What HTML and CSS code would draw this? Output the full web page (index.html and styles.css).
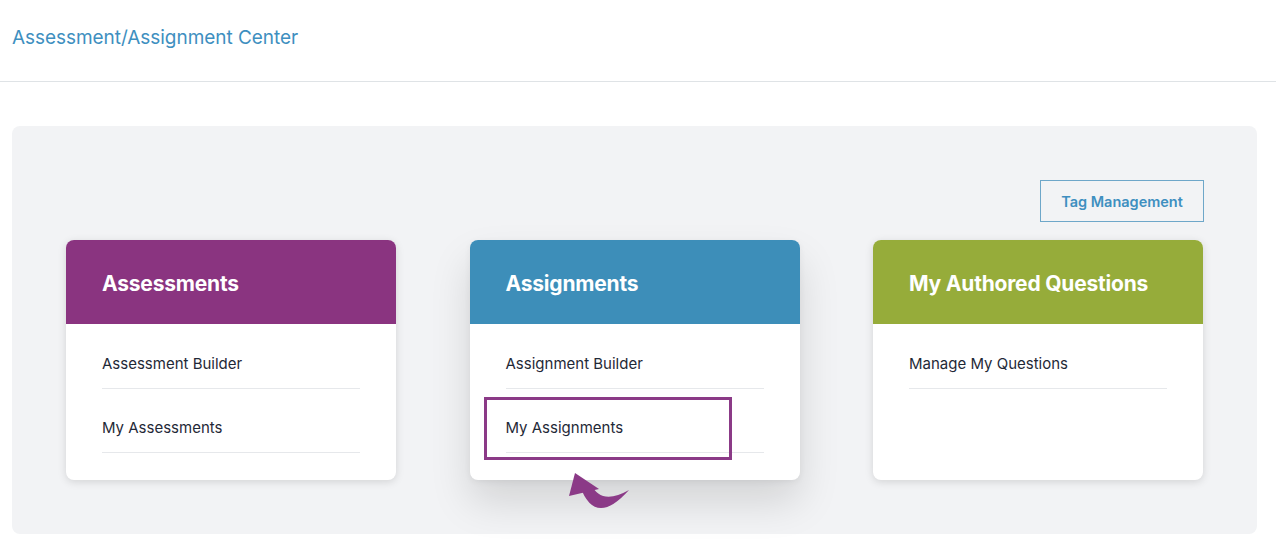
FILE: index.html
```html
<!DOCTYPE html>
<html lang="en">
<head>
<meta charset="utf-8">
<title>Assessment/Assignment Center</title>
<link rel="stylesheet" href="styles.css">
</head>
<body>
<header class="topbar">
  <h1 class="page-title">Assessment/Assignment Center</h1>
</header>
<main class="main">
  <section class="panel">
    <div class="toolbar">
      <button class="tag-btn" type="button">Tag Management</button>
    </div>
    <div class="cards">
      <div class="card">
        <div class="card-head purple">Assessments</div>
        <ul class="card-list">
          <li>Assessment Builder</li>
          <li>My Assessments</li>
        </ul>
      </div>
      <div class="card card-active">
        <div class="card-head blue">Assignments</div>
        <ul class="card-list">
          <li>Assignment Builder</li>
          <li>My Assignments</li>
        </ul>
        <div class="highlight"></div>
        <svg class="arrow" width="66" height="44" viewBox="0 0 66 44" aria-hidden="true">
          <path d="M13 16 Q28 58 62 20 Q34 36 24 14 Z" fill="#8b3a87"/>
          <path d="M8 3 L2 26 L32 19 Z" fill="#8b3a87"/>
        </svg>
      </div>
      <div class="card">
        <div class="card-head green">My Authored Questions</div>
        <ul class="card-list">
          <li>Manage My Questions</li>
        </ul>
      </div>
    </div>
  </section>
</main>
</body>
</html>
```
FILE: styles.css
```css
* { box-sizing: border-box; }
html, body { margin: 0; padding: 0; background: #fff; }
body {
  font-family: Inter, "Liberation Sans", Arial, sans-serif;
  color: #1f2937;
  width: 1276px;
  height: 542px;
  overflow: hidden;
}
.topbar {
  height: 82px;
  border-bottom: 1px solid #dfe3e6;
  display: flex;
  align-items: center;
  padding: 0 12px 6px;
}
.page-title {
  margin: 0;
  font-size: 19px;
  font-weight: 400;
  color: #3e8fc0;
  letter-spacing: -0.05px;
}
.main {
  padding: 44px 19px 0 12px;
}
.panel {
  background: #f2f3f5;
  border-radius: 8px;
  height: 408px;
  padding: 54px 54px 0 54px;
}
.toolbar {
  display: flex;
  justify-content: flex-end;
  margin-right: -1px;
}
.tag-btn {
  width: 164px;
  height: 42px;
  background: transparent;
  border: 1.5px solid #6ea7c9;
  color: #3e8fc0;
  font-family: inherit;
  font-size: 14.5px;
  font-weight: 600;
  padding: 0;
  cursor: pointer;
}
.cards {
  margin-top: 18px;
  display: flex;
  justify-content: space-between;
  align-items: stretch;
}
.card {
  position: relative;
  width: 330px;
  background: #fff;
  border-radius: 8px;
  box-shadow: 0 2px 8px rgba(0, 0, 0, 0.13);
  padding-bottom: 27px;
}
.card-active {
  box-shadow: 0 22px 40px rgba(0, 0, 0, 0.13), 0 2px 6px rgba(0, 0, 0, 0.06);
}
.card-head {
  height: 84px;
  border-radius: 8px 8px 0 0;
  color: #fff;
  font-size: 21px;
  font-weight: 700;
  padding: 31px 36px 0;
  letter-spacing: -0.2px;
}
.purple { background: #8a3480; }
.blue { background: #3d8eb9; }
.green { background: #96ac3a; }
.card-list {
  list-style: none;
  margin: 0;
  padding: 1px 36px 0;
}
.card-list li {
  font-size: 15px;
  line-height: 20px;
  padding: 29px 0 14px;
  border-bottom: 1px solid #e6e8eb;
}
.highlight {
  position: absolute;
  left: 14px;
  top: 157px;
  width: 248px;
  height: 63px;
  border: 3px solid #8b3a87;
}
.arrow {
  position: absolute;
  left: 97px;
  top: 230px;
}
```
